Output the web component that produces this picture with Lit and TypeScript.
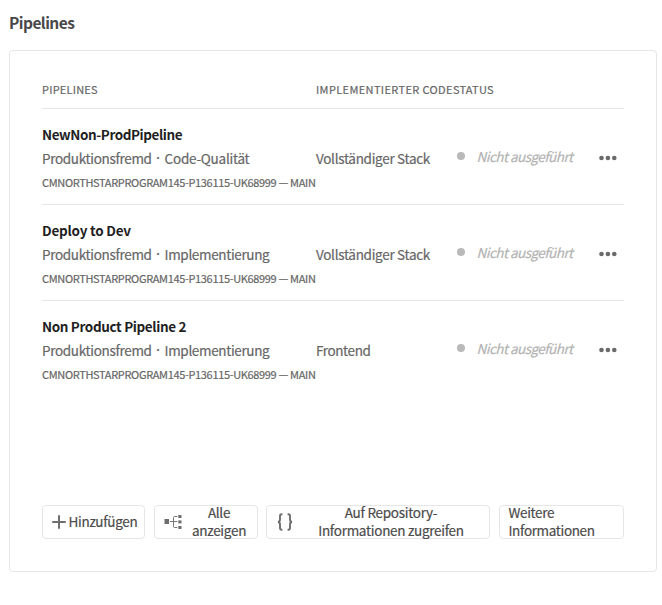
import { LitElement, html, css, svg } from "lit";
import { customElement } from "lit/decorators.js";

interface Pipeline {
  name: string;
  nameClass: string;
  kind: string;
  kindClass: string;
  code: string;
  codeClass: string;
}

const PIPELINES: Pipeline[] = [
  { name: "NewNon-ProdPipeline", nameClass: "n1", kind: "Code-Qualität", kindClass: "k1", code: "Vollständiger Stack", codeClass: "c1" },
  { name: "Deploy to Dev", nameClass: "n2", kind: "Implementierung", kindClass: "k2", code: "Vollständiger Stack", codeClass: "c1" },
  { name: "Non Product Pipeline 2", nameClass: "n3", kind: "Implementierung", kindClass: "k2", code: "Frontend", codeClass: "c2" },
];

const plusIcon = svg`<svg width="14" height="14" viewBox="0 0 14 14"><path d="M7 1v12M1 7h12" stroke="#6e6e6e" stroke-width="2" stroke-linecap="round"/></svg>`;

const treeIcon = svg`<svg width="18" height="16" viewBox="0 0 18 16"><g fill="#6e6e6e"><rect x="0.5" y="5" width="4.5" height="5"/><rect x="14.3" y="1" width="3.2" height="3"/><rect x="14.3" y="6.4" width="3.2" height="3"/><rect x="14.3" y="12" width="3.2" height="3"/></g><path d="M6 7.5h7.3M13.3 2.5h-2.8q-1 0-1 1v9q0 1 1 1h2.8" fill="none" stroke="#777"/></svg>`;

const bracesIcon = svg`<svg width="16" height="18" viewBox="0 0 16 18"><path d="M5.4 1.3H4.6q-1.6 0-1.6 1.6v3.7q0 2-1.9 2.4 1.9.4 1.9 2.4v3.7q0 1.6 1.6 1.6h.8M10.6 1.3h.8q1.6 0 1.6 1.6v3.7q0 2 1.9 2.4-1.9.4-1.9 2.4v3.7q0 1.6-1.6 1.6h-.8" fill="none" stroke="#6e6e6e" stroke-width="1.9"/></svg>`;

const moreIcon = svg`<svg width="18" height="6" viewBox="0 0 18 6"><g fill="#6a6a6a"><circle cx="2.5" cy="3" r="2.3"/><circle cx="8.9" cy="3" r="2.3"/><circle cx="15.3" cy="3" r="2.3"/></g></svg>`;

@customElement("app-root")
export class AppRoot extends LitElement {
  static styles = css`
    :host {
      display: block;
      box-sizing: border-box;
      height: 605px;
      padding: 10px 5px 0 9px;
      background: #fff;
      color: #666;
      font: 13.5px/24px "Noto Sans CJK SC", "Noto Sans", sans-serif;
      -webkit-text-stroke: 0.2px currentColor;
      white-space: nowrap;
      overflow: hidden;
    }
    svg { display: block; flex: none; }
    .heading { margin: 0; font-size: 15.5px; font-weight: 700; line-height: 24px; color: #484848; letter-spacing: -0.55px; -webkit-text-stroke: 0; }
    .card {
      box-sizing: border-box;
      height: 522px;
      margin-top: 16px;
      padding: 27px 32px 32px;
      border: 1px solid #e6e6e6;
      border-radius: 4px;
      display: flex;
      flex-direction: column;
    }
    .head, .row { display: grid; grid-template-columns: 274px 137px 1fr; border-bottom: 1px solid #e6e6e6; }
    .head { height: 30px; font-size: 11px; line-height: 22px; letter-spacing: 0.22px; }
    .h2 { letter-spacing: 0.37px; }
    .row { height: 95px; }
    .row.last { border-bottom: 0; }
    .info { padding-top: 13px; }
    .name { font-weight: 700; line-height: 24px; color: #1f1f1f; -webkit-text-stroke: 0; }
    .n1 { letter-spacing: -0.42px; }
    .n2 { letter-spacing: -0.22px; }
    .n3 { letter-spacing: -0.36px; }
    .type { line-height: 24px; display: flex; }
    .prod { letter-spacing: -0.33px; }
    .k1 { letter-spacing: -0.25px; }
    .k2 { letter-spacing: -0.35px; }
    .c1 { letter-spacing: -0.3px; }
    .c2 { letter-spacing: -0.39px; }
    .sep { width: 13px; text-align: center; font-size: 9px; }
    .branch { font-size: 11px; line-height: 24px; letter-spacing: -0.34px; }
    .code { padding-top: 37px; }
    .status { padding-top: 35px; display: flex; height: 24px; align-items: center; }
    .dot { width: 8px; height: 8px; border-radius: 50%; background: #b9b9b9; margin: 0 11.5px 0 4px; }
    .state { font-style: italic; color: #b3b3b3; width: 122px; letter-spacing: -0.54px; }
    .more { padding-top: 3px; }
    .actions { display: flex; gap: 8.5px; margin-top: auto; }
    .btn {
      box-sizing: border-box;
      height: 34px;
      border: 1px solid #e6e6e6;
      border-radius: 4px;
      background: none;
      padding: 0 0 0 9px;
      display: flex;
      align-items: center;
      font: inherit;
      line-height: 18px;
      letter-spacing: -0.28px;
      color: #4b4b4b;
      text-align: center;
      white-space: nowrap;
    }
    .add { width: 103px; letter-spacing: -0.3px; }
    .all { width: 104px; }
    .repo { width: 224px; padding-left: 10px; }
    .info-btn { flex: 1; text-align: left; letter-spacing: -0.35px; }
    .label { flex: 1; padding-bottom: 2px; }
    .add .label { flex: none; margin-left: 2.5px; }
    .all .label { padding-right: 9px; margin-left: 9px; }
    .repo .label { margin-left: 20px; padding-right: 20px; }
  `;

  render() {
    return html`
      <h1 class="heading">Pipelines</h1>
      <section class="card">
        <div class="head">
          <div>PIPELINES</div>
          <div class="h2">IMPLEMENTIERTER CODE</div>
          <div>STATUS</div>
        </div>
        ${PIPELINES.map(
          (p, i) => html`
            <div class="row ${i === PIPELINES.length - 1 ? "last" : ""}">
              <div class="info">
                <div class="name"><span class=${p.nameClass}>${p.name}</span></div>
                <div class="type"><span class="prod">Produktionsfremd</span><span class="sep">·</span><span class=${p.kindClass}>${p.kind}</span></div>
                <div class="branch">CMNORTHSTARPROGRAM145-P136115-UK68999 — MAIN</div>
              </div>
              <div class="code"><span class=${p.codeClass}>${p.code}</span></div>
              <div class="status"><span class="dot"></span><span class="state">Nicht ausgeführt</span><span class="more">${moreIcon}</span></div>
            </div>
          `
        )}
        <div class="actions">
          <button class="btn add">${plusIcon}<span class="label">Hinzufügen</span></button>
          <button class="btn all">${treeIcon}<span class="label">Alle<br />anzeigen</span></button>
          <button class="btn repo">${bracesIcon}<span class="label">Auf Repository-<br />Informationen zugreifen</span></button>
          <button class="btn info-btn"><span class="label">Weitere<br />Informationen</span></button>
        </div>
      </section>
    `;
  }
}
